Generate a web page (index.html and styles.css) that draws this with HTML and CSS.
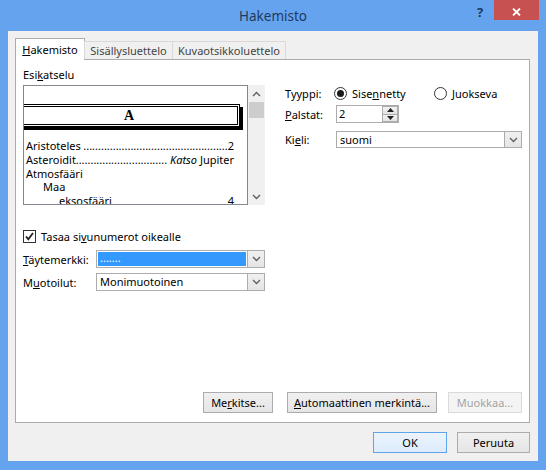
FILE: index.html
```html
<!DOCTYPE html>
<html>
<head>
<meta charset="utf-8">
<link rel="stylesheet" href="styles.css">
</head>
<body>
<div class="window">
  <div class="titlebar">
    <div></div>
    <div class="title">Hakemisto</div>
    <div class="controls">
      <span class="help">?</span>
      <span class="close"><svg width="9" height="8" viewBox="0 0 9 8"><path d="M1 0.5 L8 7.5 M8 0.5 L1 7.5" stroke="#fff" stroke-width="1.8" fill="none"/></svg></span>
    </div>
  </div>
  <div class="client">
    <div class="tabs">
      <div class="tab active t1"><u>H</u>akemisto</div>
      <div class="tab t2">Sisällysluettelo</div>
      <div class="tab t3">Kuvaotsikkoluettelo</div>
    </div>
    <div class="panel">
      <div class="columns">
        <div class="left">
          <div class="esi-label">Esi<u>k</u>atselu</div>
          <div class="preview-wrap">
            <div class="preview">
              <div class="frame"><div class="frame-inner">A</div></div>
              <div class="entries">
                <div class="entry"><span>Aristoteles&nbsp;</span><span class="leader"></span><span>2</span></div>
                <div class="entry"><span>Asteroidit</span><span class="leader"></span><span>&nbsp;<i>Katso</i> Jupiter</span></div>
                <div class="entry"><span>Atmosfääri</span></div>
                <div class="entry ind1"><span>Maa</span></div>
                <div class="entry ind2"><span>eksosfääri</span><span class="gap"></span><span>4</span></div>
              </div>
            </div>
            <div class="scroll">
              <div class="sbtn"><svg width="9" height="6" viewBox="0 0 9 6"><path d="M1 5 L4.5 1.5 L8 5" stroke="#606060" stroke-width="1.4" fill="none"/></svg></div>
              <div class="thumb"></div>
              <div class="track"></div>
              <div class="sbtn"><svg width="9" height="6" viewBox="0 0 9 6"><path d="M1 1 L4.5 4.5 L8 1" stroke="#606060" stroke-width="1.4" fill="none"/></svg></div>
            </div>
          </div>
          <div class="check-row">
            <span class="checkbox"><svg width="11" height="11" viewBox="0 0 11 11"><path d="M2 5.5 L4.3 8.2 L9 2" stroke="#222" stroke-width="1.8" fill="none"/></svg></span>
            <span>Tasaa si<u>v</u>unumerot oikealle</span>
          </div>
          <div class="field-row fill-row">
            <span><u>T</u>äytemerkki:</span>
            <div class="select">
              <div class="select-text"><span class="hilite">.......</span></div>
              <div class="select-btn"><svg width="9" height="6" viewBox="0 0 9 6"><path d="M1 1 L4.5 4.5 L8 1" stroke="#606060" stroke-width="1.4" fill="none"/></svg></div>
            </div>
          </div>
          <div class="field-row format-row">
            <span>M<u>u</u>otoilut:</span>
            <div class="select">
              <div class="select-text">Monimuotoinen</div>
              <div class="select-btn"><svg width="9" height="6" viewBox="0 0 9 6"><path d="M1 1 L4.5 4.5 L8 1" stroke="#606060" stroke-width="1.4" fill="none"/></svg></div>
            </div>
          </div>
        </div>
        <div class="right">
          <div class="rrow type-row">
            <span>Tyyppi:</span>
            <div class="radios">
              <label class="opt first"><span class="radio checked"></span><span>Sise<u>n</u>netty</span></label>
              <label class="opt"><span class="radio"></span><span><u>J</u>uokseva</span></label>
            </div>
          </div>
          <div class="rrow spin-row">
            <span><u>P</u>alstat:</span>
            <div class="spin">
              <div class="spin-text">2</div>
              <div class="spin-btns">
                <div class="spin-btn"><svg width="7" height="4" viewBox="0 0 7 4"><path d="M0 4 L3.5 0 L7 4 Z" fill="#222"/></svg></div>
                <div class="spin-btn"><svg width="7" height="4" viewBox="0 0 7 4"><path d="M0 0 L3.5 4 L7 0 Z" fill="#222"/></svg></div>
              </div>
            </div>
          </div>
          <div class="rrow lang-row">
            <span>Ki<u>e</u>li:</span>
            <div class="select">
              <div class="select-text">suomi</div>
              <div class="select-btn"><svg width="9" height="6" viewBox="0 0 9 6"><path d="M1 1 L4.5 4.5 L8 1" stroke="#606060" stroke-width="1.4" fill="none"/></svg></div>
            </div>
          </div>
        </div>
      </div>
      <div class="actions">
        <div class="btn b-mark">Me<u>r</u>kitse...</div>
        <div class="btn b-auto"><u>A</u>utomaattinen merkintä...</div>
        <div class="btn b-edit disabled">Muokkaa...</div>
      </div>
    </div>
    <div class="footer">
      <div class="btn default b-ok">OK</div>
      <div class="btn b-cancel">Peruuta</div>
    </div>
  </div>
</div>
</body>
</html>
```
FILE: styles.css
```css
* { box-sizing: border-box; }
html, body { margin: 0; padding: 0; }
body {
  width: 546px;
  height: 470px;
  overflow: hidden;
  background: #66a3ee;
  font-family: "Noto Sans", "Segoe UI", sans-serif;
  font-size: 11px;
  color: #000;
}
u { text-decoration: underline; text-underline-offset: 1px; }

.window { width: 546px; height: 470px; display: flex; flex-direction: column; }

.titlebar {
  height: 31px;
  display: grid;
  grid-template-columns: 1fr auto 1fr;
  align-items: start;
}
.title {
  font-size: 13.5px;
  line-height: 32px;
  color: #1e3a5f;
}
.controls { display: flex; justify-content: flex-end; padding-right: 7px; }
.help {
  width: 28px;
  height: 20px;
  text-align: center;
  font-weight: bold;
  font-size: 13px;
  line-height: 24px;
  color: #1e3a5f;
}
.close {
  width: 45px;
  height: 20px;
  background: #c75050;
  display: flex;
  align-items: center;
  justify-content: center;
  padding-top: 3px;
}

.client {
  margin: 0 8px;
  height: 430px;
  background: #f0f0f0;
  padding: 7px 8px 8px 7px;
  display: flex;
  flex-direction: column;
}

.tabs { display: flex; align-items: flex-end; height: 21px; position: relative; z-index: 1; }
.tab {
  height: 18px;
  border: 1px solid #d9d9d9;
  border-bottom: none;
  background: #f0f0f0;
  margin-left: -1px;
  text-align: center;
  line-height: 17px;
  color: #444;
  white-space: nowrap;
}
.tab.active {
  height: 22px;
  margin-bottom: -1px;
  margin-left: 0;
  background: #fff;
  border-color: #acacac;
  color: #000;
  line-height: 21px;
}
.t1 { width: 70px; }
.t2 { width: 89px; margin-left: -1px; }
.t3 { width: 114px; }

.panel {
  height: 364px;
  background: #fff;
  border: 1px solid #acacac;
  padding: 8px 7px 9px 7px;
  display: flex;
  flex-direction: column;
}
.columns { display: grid; grid-template-columns: 242px 237px; column-gap: 20px; }

.esi-label { line-height: 14px; height: 14px; margin-bottom: 3px; }
.preview-wrap { display: flex; height: 120px; }
.preview {
  width: 225px;
  border: 1px solid #828790;
  background: #fff;
  overflow: hidden;
  padding-top: 18px;
}
.frame {
  margin: 0 7px 0 -6px;
  border: 1px solid #000;
  padding: 1px;
  box-shadow: 3px 3px 0 #000;
}
.frame-inner {
  border: 1px solid #000;
  height: 19px;
  text-align: center;
  font-family: "Liberation Serif", serif;
  font-weight: bold;
  font-size: 14px;
  line-height: 17px;
}
.entries { margin-top: 12px; padding: 0 13px 0 2px; line-height: 13.75px; white-space: nowrap; }
.entry { display: flex; }
.leader { flex: 1; overflow: hidden; direction: rtl; }
.leader::before { content: "........................................................................................................"; }
.gap { flex: 1; }
.ind1 { padding-left: 17px; }
.ind2 { padding-left: 33px; }

.scroll { width: 17px; background: #f0f0f0; display: flex; flex-direction: column; }
.sbtn { height: 17px; display: flex; align-items: center; justify-content: center; }
.thumb { height: 16px; margin: 0 1px; background: #cdcdcd; }
.track { flex: 1; }

.check-row { margin-top: 25px; height: 13px; display: flex; align-items: center; gap: 5px; }
.checkbox {
  width: 13px; height: 13px;
  border: 1px solid #333;
  background: #fff;
  display: flex; align-items: center; justify-content: center;
}

.field-row { display: grid; grid-template-columns: 73px 169px; align-items: center; height: 18px; }
.fill-row { margin-top: 7px; }
.format-row { margin-top: 5px; }

.select {
  height: 100%;
  border: 1px solid #acacac;
  background: #fff;
  display: flex;
}
.select-text { flex: 1; padding-left: 3px; line-height: 15px; white-space: nowrap; overflow: hidden; }
.fill-row .select-text { padding: 1px; }
.hilite { display: block; height: 100%; background: #3399ff; color: #fff; line-height: 12px; padding-left: 2px; }
.select-btn {
  width: 17px;
  border-left: 1px solid #acacac;
  background: linear-gradient(#f0f0f0, #e5e5e5);
  display: flex; align-items: center; justify-content: center;
}

.rrow { display: grid; grid-template-columns: 51px 186px; align-items: center; }
.type-row { margin-top: 17px; height: 16px; }
.radios { display: flex; margin-left: -2px; }
.opt { display: flex; align-items: center; gap: 5px; }
.opt.first { width: 100px; }
.radio {
  width: 13px; height: 13px;
  border: 1px solid #333;
  border-radius: 50%;
  background: #fff;
  display: flex; align-items: center; justify-content: center;
}
.radio.checked::after { content: ""; width: 7px; height: 7px; border-radius: 50%; background: #1a1a1a; }

.spin-row { margin-top: 4px; height: 18px; }
.spin {
  width: 63px; height: 18px;
  border: 1px solid #acacac;
  background: #fff;
  display: flex;
}
.spin-text { flex: 1; padding-left: 2px; line-height: 16px; }
.spin-btns { width: 16px; display: flex; flex-direction: column; }
.spin-btn {
  flex: 1;
  border: 1px solid #acacac;
  background: linear-gradient(#f2f2f2, #e3e3e3);
  display: flex; align-items: center; justify-content: center;
}
.spin-btn + .spin-btn { border-top: none; }

.lang-row { margin-top: 8px; height: 17px; }
.lang-row .select-text { line-height: 15px; }

.actions { margin-top: auto; display: flex; justify-content: flex-end; }
.btn {
  height: 21px;
  border: 1px solid #acacac;
  background: linear-gradient(#f0f0f0, #e5e5e5);
  text-align: center;
  line-height: 19px;
  white-space: nowrap;
}
.b-mark { width: 70px; }
.b-auto { width: 150px; margin-left: 14px; }
.b-edit { width: 74px; margin-left: 11px; }
.btn.disabled { background: #f4f4f4; border-color: #dadada; color: #a3a3a3; }

.footer { margin-top: 9px; display: flex; justify-content: flex-end; }
.b-ok { width: 74px; }
.b-cancel { width: 73px; margin-left: 10px; }
.btn.default { border-color: #5ea4e6; background: linear-gradient(#ecf4fc, #dcecfc); }
```
